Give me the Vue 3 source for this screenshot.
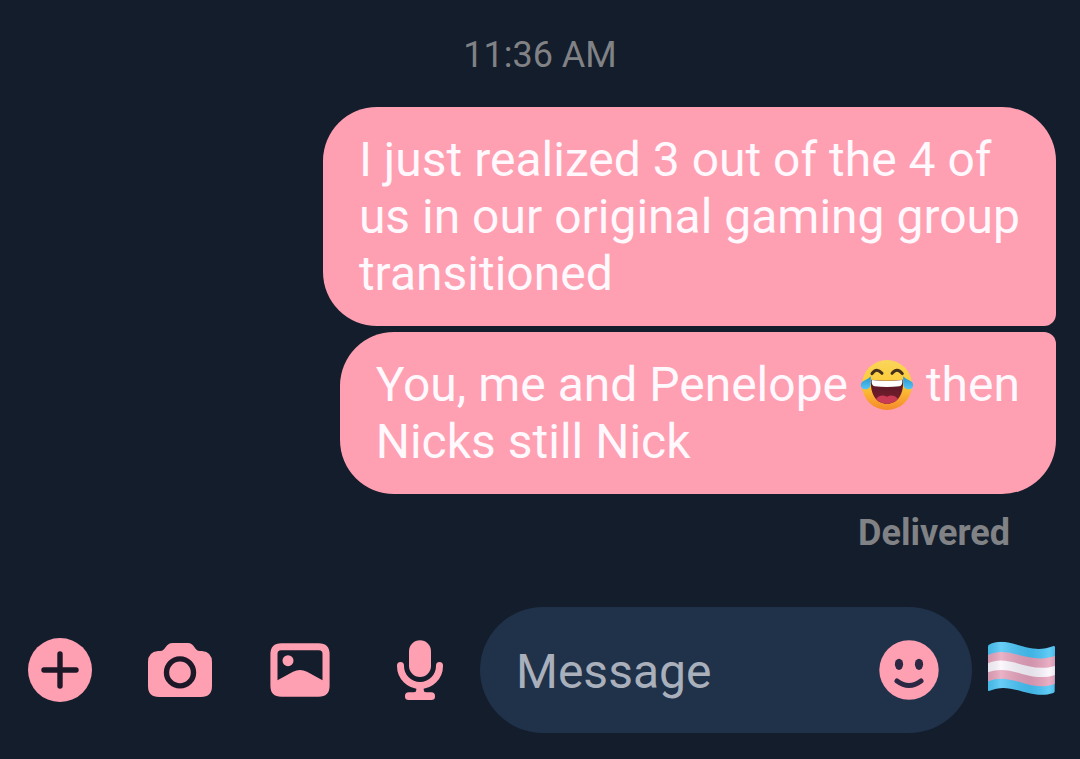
<script setup>
import { ref } from 'vue'

const draft = ref('')
</script>

<template>
  <main class="chat">
    <section class="thread" aria-label="Conversation">
      <time class="stamp" datetime="11:36">11:36 AM</time>
      <div class="messages">
        <p class="bubble first">I just realized 3 out of the 4 of<br />us in our original gaming group<br />transitioned</p>
        <p class="bubble last">You, me and Penelope
          <svg class="joy" viewBox="27 25 162 162" role="img" aria-label="Face with tears of joy">
            <defs>
              <linearGradient id="face" x1="0" y1="0" x2="0" y2="1">
                <stop offset="0" stop-color="#f9d65a" />
                <stop offset="0.5" stop-color="#fdc936" />
                <stop offset="1" stop-color="#f5892a" />
              </linearGradient>
              <linearGradient id="mouth" x1="0" y1="0" x2="0" y2="1">
                <stop offset="0" stop-color="#541a26" />
                <stop offset="1" stop-color="#7c1c2e" />
              </linearGradient>
              <linearGradient id="tear" x1="0" y1="0" x2="0" y2="1">
                <stop offset="0" stop-color="#2791cf" />
                <stop offset="1" stop-color="#55c8f5" />
              </linearGradient>
            </defs>
            <circle cx="108" cy="106" r="75" fill="url(#face)" />
            <path d="M63 72Q77 52 93 71M123 71Q138 52 154 72" fill="none" stroke="#46301c" stroke-width="9" stroke-linecap="round" stroke-linejoin="round" />
            <path d="M60 90Q108 96 156 90C159 134 140 162 108 162C76 162 57 134 60 90Z" fill="url(#mouth)" />
            <path d="M75 148C84 136 97 135 108 141C119 135 132 136 141 148Q128 162 108 162Q88 162 75 148Z" fill="#c93a55" />
            <path d="M62 91Q108 97 154 91Q155 108 145 110Q108 114 71 110Q61 108 62 91Z" fill="#fff" />
            <path d="M59 80C60 96 62 118 44 119C28 120 25 102 36 95C43 90 53 88 59 80Z" fill="url(#tear)" />
            <path d="M157 80C156 96 154 118 172 119C188 120 191 102 180 95C173 90 163 88 157 80Z" fill="url(#tear)" />
          </svg>
          then<br />Nicks still Nick</p>
      </div>
      <p class="status">Delivered</p>
    </section>

    <form class="composer" @submit.prevent>
      <button class="tool" type="button" aria-label="More actions">
        <svg class="icon" viewBox="0 0 72 72">
          <circle cx="36" cy="36" r="32" class="fill" />
          <path d="M36 20V52M20 36H52" class="cut" />
        </svg>
      </button>
      <button class="tool" type="button" aria-label="Camera">
        <svg class="icon" viewBox="0 0 72 72">
          <path class="fill" d="M14 17H16C22 17 21 9 29 9H43.500C51 9 50 17 56 17H58Q68 18 68 28V52Q68 63 57 63H15Q4 63 4 52V28Q4 18 14 17Z" />
          <circle cx="36" cy="38.400" r="13.500" class="cut" />
        </svg>
      </button>
      <button class="tool" type="button" aria-label="Photos">
        <svg class="icon" viewBox="0 0 72 72">
          <path class="fill" fill-rule="evenodd" d="M17.400 9.300H54.600Q65.600 9.300 65.600 20.300V51.700Q65.600 62.700 54.600 62.700H17.400Q6.400 62.700 6.400 51.700V20.300Q6.400 9.300 17.400 9.300ZM17 16.300Q13.500 16.300 13.500 20V46.300L29 37.800Q36 34.200 43 37.800L58.500 46.300V20Q58.500 16.300 55 16.300Z" />
          <circle cx="24" cy="26.700" r="5.500" class="fill" />
        </svg>
      </button>
      <button class="tool" type="button" aria-label="Record voice message">
        <svg class="icon" viewBox="0 0 72 72">
          <rect x="25" y="6.300" width="22" height="36.700" rx="11" class="fill" />
          <path class="arc" d="M16.500 31.500V32A19.500 19.500 0 0 0 55.500 32V31.500" />
          <path class="fill" d="M32.300 53H39.700V56Q39.700 58.300 42 58.300H47.200A3.850 3.850 0 0 1 47.200 66H24.800A3.850 3.850 0 0 1 24.800 58.300H30Q32.300 58.300 32.300 56Z" />
        </svg>
      </button>

      <div class="field">
        <input v-model="draft" class="entry" type="text" placeholder="Message" aria-label="Message" />
        <button class="smile" type="button" aria-label="Choose an emoji">
          <svg class="icon" viewBox="0 0 72 72">
            <circle cx="36" cy="36" r="29.700" class="fill" />
            <ellipse cx="26" cy="30.300" rx="4.100" ry="5.600" class="eye" />
            <ellipse cx="46" cy="30.300" rx="4.100" ry="5.600" class="eye" />
            <path d="M24 47Q36 56 48 47" class="grin" />
          </svg>
        </button>
      </div>

      <button class="flag" type="button" aria-label="Send transgender flag">
        <svg class="banner" viewBox="382 60 204 180">
          <defs>
            <linearGradient id="shade" x1="0" y1="0" x2="1" y2="0">
              <stop offset="0" stop-color="#123" stop-opacity="0.08" />
              <stop offset="0.22" stop-color="#fff" stop-opacity="0.2" />
              <stop offset="0.6" stop-color="#124" stop-opacity="0.1" />
              <stop offset="0.85" stop-color="#fff" stop-opacity="0.16" />
              <stop offset="1" stop-color="#123" stop-opacity="0.12" />
            </linearGradient>
            <clipPath id="cloth">
              <path d="M385 74C445 42 500 110 579 78Q583 78 583 82L582 214Q582 217 578 219C505 242 455 182 385 213Q382 214 382 210V80Q382 76 385 74Z" />
            </clipPath>
          </defs>
          <g clip-path="url(#cloth)">
            <path d="M370 50H600V240H370Z" fill="#45c3f5" />
            <path d="M382 105C445 73 505 137 586 107V191C505 221 455 154 382 184Z" fill="#e6a0b8" />
            <path d="M382 130C445 99 505 163 586 137V164C505 192 455 129 382 157Z" fill="#fbf6fc" />
            <path d="M370 50H600V240H370Z" fill="url(#shade)" />
          </g>
        </svg>
      </button>
    </form>
  </main>
</template>

<style>
body {
  margin: 0;
  background: #141d2b;
}
</style>

<style scoped>
.chat {
  display: flex;
  flex-direction: column;
  box-sizing: border-box;
  min-height: 100vh;
  background: #141d2b;
  color: #fff8fc;
  font-family: Roboto, "Liberation Sans", sans-serif;
}

.thread {
  display: flex;
  flex: 1;
  flex-direction: column;
  padding: 34px 24px 24px;
}

.stamp {
  align-self: center;
  color: #808285;
  font-size: 36px;
  line-height: 42px;
}

.messages {
  display: flex;
  flex-direction: column;
  align-items: flex-end;
  gap: 6px;
  margin-top: 31px;
}

.bubble {
  margin: 0;
  padding: 24px 36px;
  border-radius: 54px;
  background: #ff9fb2;
  font-size: 48px;
  line-height: 57px;
}

.first {
  border-bottom-right-radius: 12px;
}

.last {
  border-top-right-radius: 12px;
}

.joy {
  width: 54px;
  height: 54px;
  vertical-align: -11px;
}

.status {
  align-self: flex-end;
  margin: 18px 46px 0 0;
  color: #808285;
  font-size: 36px;
  font-weight: 700;
  line-height: 42px;
}

.status {
  margin-right: 46px;
}

.composer {
  display: flex;
  align-items: center;
  padding-bottom: 26px;
}

button {
  display: flex;
  align-items: center;
  justify-content: center;
  flex: none;
  padding: 0;
  border: 0;
  background: none;
  cursor: pointer;
}

.tool {
  width: 120px;
  height: 120px;
}

.icon {
  width: 72px;
  height: 72px;
}

.fill {
  fill: #ff9fb2;
}

.cut {
  fill: none;
  stroke: #1c1828;
  stroke-width: 5.400;
  stroke-linecap: round;
}

.arc {
  fill: none;
  stroke: #ff9fb2;
  stroke-width: 7;
  stroke-linecap: round;
}

.eye {
  fill: #2c2843;
}

.grin {
  fill: none;
  stroke: #2c2843;
  stroke-width: 5;
  stroke-linecap: round;
}

.field {
  display: flex;
  flex: 1;
  align-items: center;
  box-sizing: border-box;
  min-width: 0;
  height: 126px;
  padding: 0 27px 0 36px;
  border-radius: 63px;
  background: #20314a;
}

.entry {
  flex: 1;
  min-width: 0;
  padding: 2px 0 0;
  border: 0;
  outline: 0;
  background: none;
  color: #fff8fc;
  font-family: inherit;
  font-size: 48px;
  line-height: 57px;
}

.entry::placeholder {
  color: #a9b0bb;
  opacity: 1;
}

.flag {
  padding: 0 24px 0 16px;
}

.banner {
  width: 68px;
  height: 60px;
}
</style>
